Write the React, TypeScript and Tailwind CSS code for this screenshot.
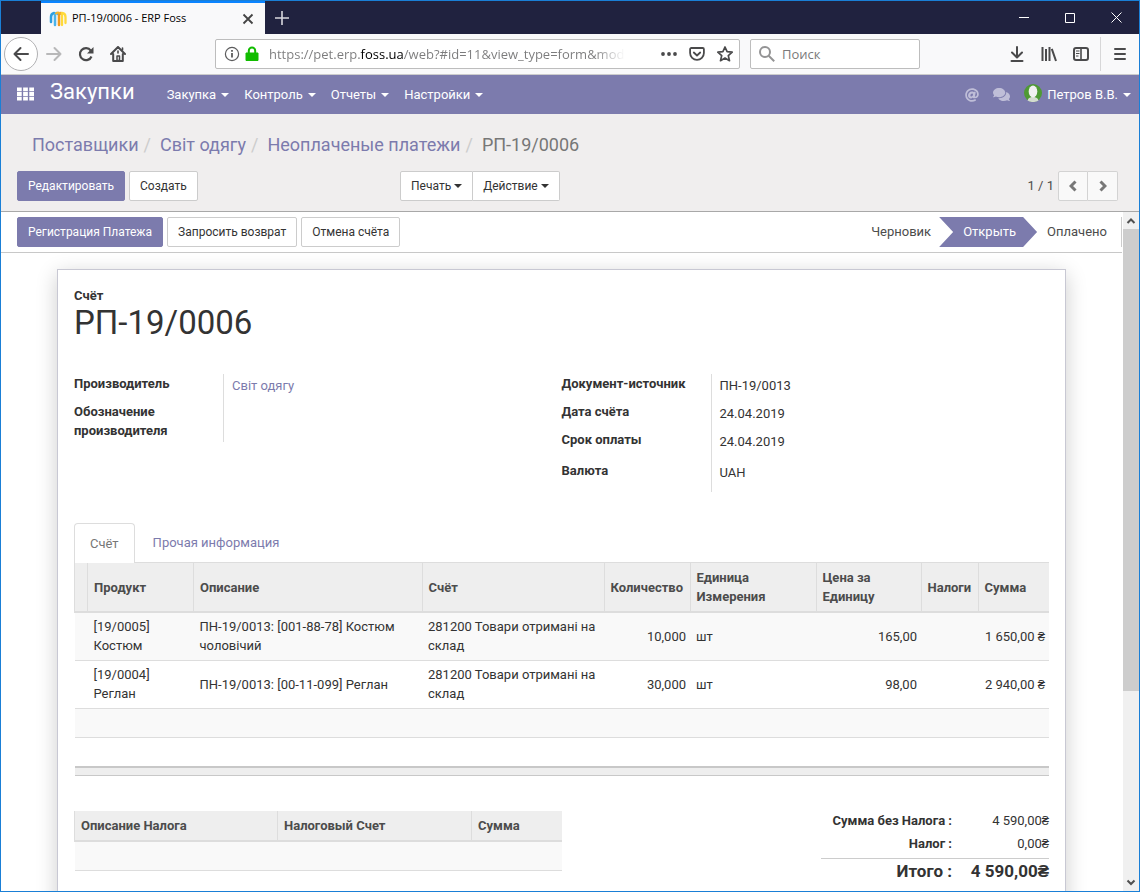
import type { ReactNode } from "react";
import { FaAt, FaComments } from "react-icons/fa";

const menus = ["Закупка", "Контроль", "Отчеты", "Настройки"];

const breadcrumbs = ["Поставщики", "Світ одягу", "Неоплаченые платежи"];

const invoiceFields = [
  { label: "Документ-источник", value: "ПН-19/0013" },
  { label: "Дата счёта", value: "24.04.2019" },
  { label: "Срок оплаты", value: "24.04.2019" },
];

const lines = [
  {
    product: "[19/0005] Костюм",
    description: "ПН-19/0013: [001-88-78] Костюм чоловічий",
    account: "281200 Товари отримані на склад",
    qty: "10,000",
    unit: "шт",
    price: "165,00",
    total: "1 650,00 ₴",
  },
  {
    product: "[19/0004] Реглан",
    description: "ПН-19/0013: [00-11-099] Реглан",
    account: "281200 Товари отримані на склад",
    qty: "30,000",
    unit: "шт",
    price: "98,00",
    total: "2 940,00 ₴",
  },
];

function Caret() {
  return (
    <svg width="8" height="4" viewBox="0 0 8 4" fill="currentColor" className="shrink-0">
      <path d="M0 0h8L4 4z" />
    </svg>
  );
}

function Btn({ primary, children }: { primary?: boolean; children: ReactNode }) {
  return (
    <button
      className={
        primary
          ? "h-[30px] rounded-xs border border-[#7c7bad] bg-[#7c7bad] px-2.5 text-xs text-white"
          : "h-[30px] rounded-xs border border-[#cccccc] bg-white px-2.5 text-xs text-[#333333]"
      }
    >
      {children}
    </button>
  );
}

function TitleBar() {
  return (
    <div className="flex h-[33px] shrink-0 bg-[#20223f]">
      <div className="ml-10 flex w-56 items-center border-t-2 border-[#0a84ff] bg-[#f9f9fa] pr-[11px] pl-2">
        <svg width="18" height="16" viewBox="0 0 18 16" fill="none" strokeLinecap="round">
          <path d="M2 11V6c0-2 1-3.500 3-4" stroke="#2f9fe0" strokeWidth="2.500" />
          <path d="M6 14V4c0-2 2-2.500 3-1" stroke="#4db4ea" strokeWidth="2.500" />
          <path d="M10 14V4c0-2 2-2.500 3-1" stroke="#f39a1e" strokeWidth="2.500" />
          <path d="M7 2.500c2-1.500 4-1 5 .5" stroke="#f7b52c" strokeWidth="2" />
          <path d="M13 14V4M13 2c2.500.2 3.500 2 3.500 4v6" stroke="#ffd93b" strokeWidth="2.300" />
        </svg>
        <span className="ml-[5px] flex-1 truncate font-['Open_Sans','Noto_Sans',sans-serif] text-[11px] text-black">
          РП-19/0006 - ERP Foss
        </span>
        <button aria-label="Закрыть вкладку">
          <svg width="12" height="12" viewBox="0 0 12 12" stroke="#444444" strokeWidth="1.800">
            <path d="M1.500 1.500l9 9M10.500 1.500l-9 9" />
          </svg>
        </button>
      </div>
      <button aria-label="Новая вкладка" className="flex w-[34px] items-center justify-center">
        <svg width="14" height="14" viewBox="0 0 14 14" stroke="#d7d7de" strokeWidth="1.600">
          <path d="M7 0v14M0 7h14" />
        </svg>
      </button>
      <div className="ml-auto flex">
        <button aria-label="Свернуть" className="flex w-[46px] items-center justify-center">
          <svg width="10" height="10" viewBox="0 0 10 10" stroke="white">
            <path d="M0 4.500h10" />
          </svg>
        </button>
        <button aria-label="Развернуть" className="flex w-[46px] items-center justify-center">
          <svg width="10" height="10" viewBox="0 0 10 10" fill="none" stroke="white">
            <path d="M.5.5h9v9h-9z" />
          </svg>
        </button>
        <button aria-label="Закрыть" className="flex w-[46px] items-center justify-center">
          <svg width="11" height="11" viewBox="0 0 11 11" stroke="white">
            <path d="M.5.5l10 10M10.500.5l-10 10" />
          </svg>
        </button>
      </div>
    </div>
  );
}

function BrowserToolbar() {
  return (
    <div className="flex h-[41px] shrink-0 items-center border-b border-[#cccccc] bg-[#f9f9fa] font-['Open_Sans','Noto_Sans',sans-serif] text-[#4a4a4b]">
      <div className="flex w-[214px] items-center pl-[3px]">
        <button aria-label="Назад" className="flex size-[34px] items-center justify-center rounded-full border border-[#b1b1b3] bg-white">
          <svg width="16" height="16" viewBox="0 0 16 16" fill="none" stroke="currentColor" strokeWidth="2" strokeLinecap="round" strokeLinejoin="round">
            <path d="M15 8H1.500M7.500 2l-6 6 6 6" />
          </svg>
        </button>
        <button aria-label="Вперёд" className="flex w-8 items-center justify-center text-[#b8b8b9]">
          <svg width="16" height="16" viewBox="0 0 16 16" fill="none" stroke="currentColor" strokeWidth="2" strokeLinecap="round" strokeLinejoin="round">
            <path d="M1 8h13.500M8.500 2l6 6-6 6" />
          </svg>
        </button>
        <button aria-label="Обновить" className="flex w-8 items-center justify-center">
          <svg width="16" height="16" viewBox="0 0 16 16" fill="none" stroke="currentColor" strokeWidth="2.200">
            <path d="M12.800 4.600A6 6 0 1 0 13.500 10.500" />
            <path d="M15.500 1v6.500H9z" fill="currentColor" stroke="none" />
          </svg>
        </button>
        <button aria-label="Домой" className="flex w-8 items-center justify-center">
          <svg width="16" height="16" viewBox="0 0 16 16" fill="none" stroke="currentColor" strokeWidth="2" strokeLinecap="round" strokeLinejoin="round">
            <path d="M1 8l7-7 7 7M3.200 8v7h9.600V8" />
            <path d="M7 14.500V10h2.500v4.500z" strokeWidth="1.500" />
            <path d="M8 5v2M12.500 2v2" strokeWidth="1.600" />
          </svg>
        </button>
      </div>

      <div className="flex h-[30px] flex-1 items-center rounded-xs border border-[#bdbdbd] bg-white pr-1.5 pl-2">
        <svg width="16" height="16" viewBox="0 0 16 16" fill="none" stroke="#5c5c5d" strokeWidth="1.200">
          <circle cx="8" cy="8" r="6.600" />
          <path d="M8 7v4.500M8 4v1.700" strokeWidth="1.800" />
        </svg>
        <svg width="14" height="16" viewBox="0 0 14 16" className="ml-[5px]">
          <path d="M1 7h12v7.500H1z" fill="#12bc00" stroke="#12bc00" strokeLinejoin="round" />
          <path d="M3.800 7V4.800a3.200 3.200 0 0 1 6.400 0V7" fill="none" stroke="#12bc00" strokeWidth="2" />
        </svg>
        <input
          aria-label="Адрес"
          readOnly
          value="https://pet.erp.foss.ua/web?#id=11&view_type=form&model=account.invoice"
          className="ml-2.5 w-[356px] bg-[linear-gradient(90deg,#7b7b7c_91px,#000_91px,#000_134px,#7b7b7c_134px,#7b7b7c_325px,transparent_356px)] bg-clip-text pt-0.5 text-[13px] text-transparent outline-none"
        />
        <div className="ml-auto flex items-center gap-3">
          <button aria-label="Действия на странице">
            <svg width="16" height="16" viewBox="0 0 16 16" fill="currentColor">
              <circle cx="2" cy="8" r="1.900" />
              <circle cx="8" cy="8" r="1.900" />
              <circle cx="14" cy="8" r="1.900" />
            </svg>
          </button>
          <button aria-label="Pocket">
            <svg width="16" height="16" viewBox="0 0 16 16" fill="none" stroke="currentColor" strokeWidth="1.800" strokeLinecap="round" strokeLinejoin="round">
              <path d="M2.300 2h11.400a1.200 1.200 0 0 1 1.200 1.200V7a6.900 6.900 0 0 1-13.800 0V3.200A1.200 1.200 0 0 1 2.300 2z" />
              <path d="M4.800 6.500L8 9.500l3.200-3" />
            </svg>
          </button>
          <button aria-label="Добавить в закладки">
            <svg width="16" height="16" viewBox="0 0 16 16" fill="none" stroke="currentColor" strokeWidth="1.700" strokeLinejoin="round">
              <path d="M8 1l2.100 4.700 5.100.5-3.900 3.400 1.200 5.100L8 12.100l-4.500 2.600 1.200-5.100L.8 6.200l5.100-.5z" />
            </svg>
          </button>
        </div>
      </div>

      <label className="ml-2.5 flex h-[30px] w-[170px] items-center rounded-xs border border-[#bdbdbd] bg-white px-2">
        <svg width="16" height="16" viewBox="0 0 16 16" fill="none" stroke="#939394" strokeWidth="2" className="shrink-0">
          <circle cx="6" cy="6" r="5" />
          <path d="M9.700 9.700l5.500 5.500" />
        </svg>
        <input
          aria-label="Поиск"
          placeholder="Поиск"
          className="ml-[7px] w-full min-w-0 bg-transparent pt-0.5 text-[13px] outline-none placeholder:text-[#7a7a7b]"
        />
      </label>

      <div className="flex w-[219px] items-center justify-end">
        <button aria-label="Загрузки" className="flex w-8 items-center justify-center">
          <svg width="14" height="16" viewBox="0 0 14 16" fill="none" stroke="currentColor" strokeWidth="2" strokeLinecap="round" strokeLinejoin="round">
            <path d="M7 1v10M2 6.500l5 5 5-5M1.500 15h11" />
          </svg>
        </button>
        <button aria-label="Библиотека" className="flex w-8 items-center justify-center">
          <svg width="16" height="16" viewBox="0 0 16 16" fill="none" stroke="currentColor" strokeWidth="2">
            <path d="M1.500 1v14M5 3v12M8.500 1v14M10.800 2.800L15 15" />
          </svg>
        </button>
        <button aria-label="Боковая панель" className="flex w-8 items-center justify-center">
          <svg width="16" height="14" viewBox="0 0 16 14" fill="none" stroke="currentColor" strokeWidth="2">
            <rect x="1" y="1" width="14" height="12" rx="2" />
            <path d="M8 1v12" strokeWidth="1.600" />
            <path d="M3 4h3.500M3 6.500h3.500M3 9h2.500" strokeWidth="1" />
          </svg>
        </button>
        <div className="ml-[3px] h-[34px] w-px bg-[#d7d7d8]" />
        <button aria-label="Меню" className="flex w-[38px] items-center justify-center">
          <svg width="12" height="14" viewBox="0 0 12 14" stroke="currentColor" strokeWidth="2" strokeLinecap="round">
            <path d="M1 2h10M1 7h10M1 12h10" />
          </svg>
        </button>
      </div>
    </div>
  );
}

function Navbar() {
  return (
    <nav className="flex h-[39px] shrink-0 items-center bg-[#7c7bad] pr-2 pl-4 text-[13px] text-white">
      <button aria-label="Приложения" className="pb-0.5">
        <svg width="17" height="14" viewBox="0 0 18 14" fill="currentColor">
          <path d="M0 0h5v4H0zM6.500 0h5v4h-5zM13 0h5v4h-5zM0 5h5v4H0zM6.500 5h5v4h-5zM13 5h5v4h-5zM0 10h5v4H0zM6.500 10h5v4h-5zM13 10h5v4h-5z" />
        </svg>
      </button>
      <a href="#" className="ml-4 pb-1.5 text-[22px] leading-8">
        Закупки
      </a>
      <div className="ml-8 flex gap-[15px]">
        {menus.map((m) => (
          <button key={m} className="flex items-center gap-[5px]">
            {m}
            <Caret />
          </button>
        ))}
      </div>
      <div className="ml-auto flex items-center">
        <button aria-label="Упоминания" className="text-[#bfbed8]">
          <FaAt size={14} />
        </button>
        <button aria-label="Обсуждения" className="ml-3.5 text-[#bfbed8]">
          <FaComments size={17} />
        </button>
        <button className="ml-3.5 flex items-center gap-[5px]">
          <svg width="18" height="18" viewBox="0 0 18 18" className="mb-1">
            <circle cx="9" cy="9" r="9" fill="#4f9a35" />
            <path d="M3.500 16.500c.5-2.500 2.500-3 4-3.500h3c1.500.5 3.500 1 4 3.500A9 9 0 0 1 9 18a9 9 0 0 1-5.500-1.500z" fill="#d4dccf" />
            <ellipse cx="9" cy="7.500" rx="4.300" ry="6" fill="#f1f1f1" />
          </svg>
          <span>Петров В.В.</span>
          <Caret />
        </button>
      </div>
    </nav>
  );
}

function ControlPanel() {
  return (
    <div className="flex h-[98px] shrink-0 flex-col justify-between border-b border-[#a8a8a8] bg-[#f0eeee] px-4 pt-[17px] pb-2.5">
      <ol className="flex pl-[15px] text-lg text-[#777777]">
        {breadcrumbs.map((b) => (
          <li key={b} className="flex">
            <a href="#" className="text-[#7c7bad]">
              {b}
            </a>
            <span className="mr-[9px] ml-[5px] text-[#cccccc]">/</span>
          </li>
        ))}
        <li>РП-19/0006</li>
      </ol>
      <div className="flex items-center">
        <div className="flex w-[383px] gap-1">
          <Btn primary>Редактировать</Btn>
          <Btn>Создать</Btn>
        </div>
        <div className="flex text-xs text-[#333333]">
          <button className="flex h-[30px] items-center gap-[3px] rounded-l-xs border border-[#cccccc] bg-white px-2.5">
            Печать
            <Caret />
          </button>
          <button className="flex h-[30px] items-center gap-[3px] rounded-r-xs border border-l-0 border-[#cccccc] bg-white px-2.5">
            Действие
            <Caret />
          </button>
        </div>
        <div className="ml-auto flex items-center pr-[5px] text-[#777777]">
          <span className="mr-1 text-[13px] text-[#4c4c4c]">1 / 1</span>
          <button aria-label="Предыдущая" className="flex h-[30px] w-[30px] items-center justify-center rounded-l-xs border border-[#d3d3d3] bg-[#f9f9f9]">
            <svg width="8" height="12" viewBox="0 0 8 12" fill="none" stroke="currentColor" strokeWidth="3">
              <path d="M6.500 1.500L2 6l4.500 4.500" />
            </svg>
          </button>
          <button aria-label="Следующая" className="flex h-[30px] w-[30px] items-center justify-center rounded-r-xs border border-l-0 border-[#d3d3d3] bg-[#f9f9f9]">
            <svg width="8" height="12" viewBox="0 0 8 12" fill="none" stroke="currentColor" strokeWidth="3">
              <path d="M1.500 1.500L6 6l-4.500 4.500" />
            </svg>
          </button>
        </div>
      </div>
    </div>
  );
}

function StatusBar() {
  return (
    <div className="flex h-[41px] items-center border-b border-[#c8c8c8] pl-4">
      <div className="flex gap-1">
        <Btn primary>Регистрация Платежа</Btn>
        <Btn>Запросить возврат</Btn>
        <Btn>Отмена счёта</Btn>
      </div>
      <div className="ml-auto flex h-[30px] items-center border-r border-[#cccccc] pr-3.5 text-[13px] text-[#4c4c4c]">
        <button>Черновик</button>
        <button className="mr-2.5 ml-2 h-[30px] bg-[#7c7bad] pr-[21px] pl-6 text-white [clip-path:polygon(0_0,calc(100%-14px)_0,100%_50%,calc(100%-14px)_100%,0_100%,14px_50%)]">
          Открыть
        </button>
        <button>Оплачено</button>
      </div>
    </div>
  );
}

function Fields() {
  return (
    <div className="mt-[33px] grid grid-cols-2 items-start text-[13px] leading-[19px]">
      <div className="grid grid-cols-[150px_1fr]">
        <div className="border-r border-[#dddddd] pr-4 font-bold">
          <div className="h-7">Производитель</div>
          <div className="h-10">Обозначение производителя</div>
        </div>
        <a href="#" className="pt-0.5 pl-2 text-[#7c7bad]">
          Світ одягу
        </a>
      </div>
      <dl>
        {invoiceFields.map((f) => (
          <div key={f.label} className="grid h-7 grid-cols-[150px_1fr]">
            <dt className="border-r border-[#dddddd] font-bold">{f.label}</dt>
            <dd className="pt-0.5 pl-2">{f.value}</dd>
          </div>
        ))}
        <div className="grid h-[34px] grid-cols-[150px_1fr]">
          <dt className="border-r border-[#dddddd] pt-[3px] font-bold">Валюта</dt>
          <dd className="pt-[5px] pl-2">UAH</dd>
        </div>
      </dl>
    </div>
  );
}

function InvoiceLines() {
  return (
    <table className="w-full table-fixed border-collapse text-[13px] leading-[19px]">
      <colgroup>
        <col className="w-[13px]" />
        <col className="w-[106px]" />
        <col />
        <col className="w-[182px]" />
        <col className="w-[86px]" />
        <col className="w-[126px]" />
        <col className="w-[105px]" />
        <col className="w-[57px]" />
        <col className="w-[71px]" />
      </colgroup>
      <thead>
        <tr className="h-[49px] border-b-2 border-[#dddddd] bg-[#eeeeee] text-left text-[#4c4c4c] *:border-l *:border-[#dddddd] *:pl-1.5">
          <th></th>
          <th>Продукт</th>
          <th>Описание</th>
          <th>Счёт</th>
          <th>Количество</th>
          <th>Единица Измерения</th>
          <th className="pr-8">Цена за Единицу</th>
          <th>Налоги</th>
          <th>Сумма</th>
        </tr>
      </thead>
      <tbody>
        {lines.map((l) => (
          <tr key={l.product} className="h-12 border-b border-[#dddddd] *:pr-1 *:pl-1.5 odd:bg-[#f9f9f9]">
            <td></td>
            <td>{l.product}</td>
            <td>{l.description}</td>
            <td>{l.account}</td>
            <td className="text-right">{l.qty}</td>
            <td>{l.unit}</td>
            <td className="text-right">{l.price}</td>
            <td></td>
            <td className="text-right whitespace-nowrap">{l.total}</td>
          </tr>
        ))}
        <tr className="h-[29px] border-b border-[#dddddd] bg-[#f9f9f9]">
          <td colSpan={9}></td>
        </tr>
        <tr className="h-[30px]">
          <td colSpan={9}></td>
        </tr>
      </tbody>
      <tfoot>
        <tr className="h-2 border-t-2 border-b border-t-[#c8c8c8] border-b-[#c8c8c8] bg-[#eeeeee]">
          <td colSpan={9}></td>
        </tr>
      </tfoot>
    </table>
  );
}

function Summary() {
  return (
    <div className="mt-[35px] flex items-start justify-between text-[13px] leading-[19px]">
      <table className="w-1/2 table-fixed border-collapse">
        <colgroup>
          <col />
          <col className="w-[194px]" />
          <col className="w-[90px]" />
        </colgroup>
        <thead>
          <tr className="h-[30px] border-b-2 border-[#dddddd] bg-[#eeeeee] text-left text-[#4c4c4c] *:border-l *:border-[#dddddd] *:pl-1.5">
            <th>Описание Налога</th>
            <th>Налоговый Счет</th>
            <th>Сумма</th>
          </tr>
        </thead>
        <tbody>
          <tr className="h-[30px] border-b border-[#dddddd] bg-[#f9f9f9]">
            <td colSpan={3}></td>
          </tr>
        </tbody>
      </table>
      <dl className="grid grid-cols-[131px_97px] text-right">
        <dt className="h-[23px] font-bold">Сумма без Налога :</dt>
        <dd>4 590,00₴</dd>
        <dt className="h-6 font-bold">Налог :</dt>
        <dd>0,00₴</dd>
        <dt className="border-t border-[#cccccc] text-[17px] leading-6 font-bold">Итого :</dt>
        <dd className="border-t border-[#cccccc] text-[17px] leading-6 font-bold">4 590,00₴</dd>
      </dl>
    </div>
  );
}

function Scrollbar() {
  return (
    <div className="flex w-[17px] shrink-0 flex-col items-center justify-between border-l border-white bg-[#f0f0f0] text-[#505050]">
      <svg width="16" height="17" viewBox="0 0 16 17" fill="none" stroke="currentColor" strokeWidth="2" className="shrink-0">
        <path d="M4.500 11L8 7.500l3.500 3.500" />
      </svg>
      <div className="mb-auto h-[68%] w-full bg-[#cdcdcd]" />
      <svg width="16" height="17" viewBox="0 0 16 17" fill="none" stroke="currentColor" strokeWidth="2" className="shrink-0">
        <path d="M4.500 6.500L8 10l3.500-3.500" />
      </svg>
    </div>
  );
}

export default function App() {
  return (
    <div className="flex h-screen flex-col overflow-hidden border border-[#1a7fd6] bg-white font-[Roboto,sans-serif] text-[#333333]">
      <TitleBar />
      <BrowserToolbar />
      <Navbar />
      <ControlPanel />
      <div className="flex min-h-0 flex-1">
        <main className="min-w-0 flex-1 overflow-hidden">
          <StatusBar />
          <div className="mx-14 mt-4 border border-[#c8c8d3] bg-white px-4 pt-4 pb-16 shadow-[0_5px_20px_rgba(0,0,0,0.2)]">
            <div className="text-[13px] leading-[19px] font-bold">Счёт</div>
            <h1 className="text-[33px] leading-9">РП-19/0006</h1>

            <Fields />

            {/* Tabs */}
            <div className="mt-[31px] flex border-b border-[#dddddd] text-[13px]">
              <button className="-mb-px h-10 rounded-t-sm border border-b-0 border-[#dddddd] bg-white px-[15px] text-[#777777]">
                Счёт
              </button>
              <button className="-mb-px h-10 px-[18px] text-[#7c7bad]">Прочая информация</button>
            </div>

            <InvoiceLines />
            <Summary />
          </div>
        </main>
        <Scrollbar />
      </div>
    </div>
  );
}
